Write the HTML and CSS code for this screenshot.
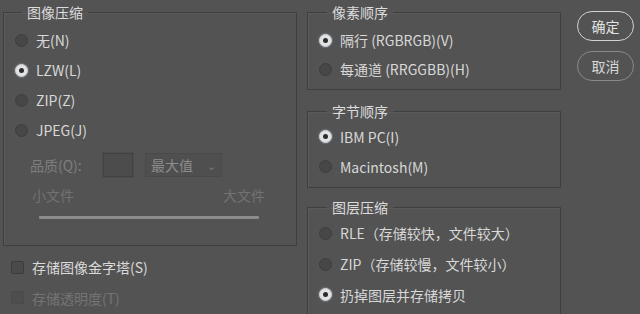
FILE: index.html
```html
<!DOCTYPE html>
<html lang="zh-CN">
<head>
<meta charset="utf-8">
<title>TIFF 选项</title>
<link rel="stylesheet" href="styles.css">
</head>
<body>
<div class="dialog">
  <div class="col-left">
    <fieldset class="group group-image">
      <legend>图像压缩</legend>
      <div class="inner inner-image">
        <div class="row"><span class="radio"></span><span class="label">无(N)</span></div>
        <div class="row"><span class="radio checked"></span><span class="label">LZW(L)</span></div>
        <div class="row"><span class="radio"></span><span class="label">ZIP(Z)</span></div>
        <div class="row"><span class="radio"></span><span class="label">JPEG(J)</span></div>
        <div class="quality">
          <span class="q-label">品质(Q):</span>
          <span class="q-input"></span>
          <span class="q-select">最大值<span class="chev">⌄</span></span>
        </div>
        <div class="size-labels"><span>小文件</span><span>大文件</span></div>
        <div class="slider"></div>
      </div>
    </fieldset>
    <div class="checks">
      <div class="check-row"><span class="checkbox"></span><span class="label">存储图像金字塔(S)</span></div>
      <div class="check-row disabled"><span class="checkbox"></span><span class="label">存储透明度(T)</span></div>
    </div>
  </div>
  <div class="col-right">
    <fieldset class="group group-pixel">
      <legend>像素顺序</legend>
      <div class="inner inner-pixel">
        <div class="row row29"><span class="radio checked"></span><span class="label">隔行 (RGBRGB)(V)</span></div>
        <div class="row row29"><span class="radio"></span><span class="label">每通道 (RRGGBB)(H)</span></div>
      </div>
    </fieldset>
    <fieldset class="group group-byte">
      <legend>字节顺序</legend>
      <div class="inner inner-byte">
        <div class="row"><span class="radio checked"></span><span class="label">IBM PC(I)</span></div>
        <div class="row"><span class="radio"></span><span class="label">Macintosh(M)</span></div>
      </div>
    </fieldset>
    <fieldset class="group group-layer">
      <legend>图层压缩</legend>
      <div class="inner inner-layer">
        <div class="row row31"><span class="radio"></span><span class="label">RLE（存储较快，文件较大）</span></div>
        <div class="row row31"><span class="radio"></span><span class="label">ZIP（存储较慢，文件较小）</span></div>
        <div class="row row31"><span class="radio checked"></span><span class="label">扔掉图层并存储拷贝</span></div>
      </div>
    </fieldset>
  </div>
  <div class="col-buttons">
    <button class="btn btn-primary">确定</button>
    <button class="btn">取消</button>
  </div>
</div>
</body>
</html>
```

FILE: styles.css
```css
* { box-sizing: border-box; }
html, body {
  margin: 0;
  padding: 0;
  background: #535353;
  width: 640px;
  height: 314px;
  overflow: hidden;
}
body {
  font-family: "Noto Sans CJK SC", "Noto Sans", sans-serif;
  font-size: 14px;
  color: #d8d8d8;
}
.dialog {
  display: flex;
  align-items: flex-start;
  padding: 3px 0 0 3px;
}
.col-left {
  width: 294px;
  display: flex;
  flex-direction: column;
}
.col-right {
  width: 254px;
  margin-left: 10px;
  display: flex;
  flex-direction: column;
}
.col-buttons {
  margin-left: 16px;
  width: 57px;
  display: flex;
  flex-direction: column;
  gap: 10px;
  padding-top: 8px;
}
.group {
  margin: 0;
  padding: 0;
  border: 1px solid #3f3f3f;
  box-shadow: inset 1px 1px 0 #5a5a5a;
  min-width: 0;
}
.group legend {
  margin-left: 19px;
  padding: 0 5px;
  line-height: 18px;
  height: 18px;
  font-size: 14px;
  color: #dcdcdc;
}
.group-image legend { margin-left: 18px; }
.inner {
  display: flex;
  flex-direction: column;
}
.inner-image { height: 224px; padding-top: 4px; }
.inner-pixel { height: 68px; padding-top: 4.5px; }
.group-byte { margin-top: 12px; }
.inner-byte { height: 67px; padding-top: 1.7px; }
.group-layer { margin-top: 10px; height: 140px; }
.inner-layer { padding-top: 2px; }

.row {
  display: flex;
  align-items: center;
  height: 30px;
  padding-left: 11px;
}
.row29 { height: 29px; }
.row31 { height: 30.8px; }
.radio {
  width: 13px;
  height: 13px;
  border-radius: 50%;
  background: #474747;
  border: 1px solid #3e3e3e;
  flex: none;
  position: relative;
}
.radio.checked {
  background: #e2e2e2;
  border-color: #cfcfcf;
  box-shadow: 0 0 1px 1px rgba(150, 170, 200, 0.35);
}
.radio.checked::after {
  content: "";
  position: absolute;
  left: 3px;
  top: 3px;
  width: 5px;
  height: 5px;
  border-radius: 50%;
  background: #2c2c2c;
}
.label {
  margin-left: 8px;
  white-space: nowrap;
  line-height: 18px;
}

.quality {
  display: flex;
  align-items: center;
  margin-top: 8px;
  height: 24px;
  padding-left: 26px;
  color: #7e7e7e;
}
.q-label { width: 73px; }
.q-input {
  width: 30px;
  height: 24px;
  border: 1px solid #414141;
  box-shadow: 0 0 0 1px #4d4d4d;
  background: #4c4c4c;
}
.q-select {
  margin-left: 12px;
  width: 77px;
  height: 24px;
  border: 1px solid #4a4a4a;
  background: #4f4f4f;
  display: flex;
  align-items: center;
  padding-left: 5px;
  color: #8c8c8c;
  font-size: 14px;
  position: relative;
}
.chev {
  margin-left: auto;
  margin-right: 5px;
  font-size: 11px;
  color: #7a7a7a;
  line-height: 10px;
}
.size-labels {
  display: flex;
  justify-content: space-between;
  margin-top: 9px;
  height: 18px;
  line-height: 18px;
  padding-left: 28px;
  padding-right: 31px;
  color: #727272;
}
.slider {
  margin-top: 12px;
  margin-left: 35px;
  width: 220px;
  height: 3px;
  background: #8c8c8c;
  border-radius: 1px;
}

.checks {
  margin-top: 6px;
  display: flex;
  flex-direction: column;
}
.check-row {
  display: flex;
  align-items: center;
  height: 30.5px;
  padding-left: 8px;
}
.checkbox {
  width: 13px;
  height: 13px;
  border: 1px solid #3c3c3c;
  background: #4a4a4a;
  border-radius: 2px;
  flex: none;
}
.check-row .label { margin-left: 8px; color: #dadada; }
.check-row.disabled .checkbox { background: #4e4e4e; border-color: #4a4a4a; }
.check-row.disabled .label { color: #747474; }

.btn {
  font-family: inherit;
  font-size: 14px;
  height: 30px;
  width: 57px;
  border-radius: 15px;
  background: transparent;
  border: 1.5px solid #8a8a8a;
  color: #d8d8d8;
  padding: 0;
  line-height: 26px;
}
.btn-primary {
  border-color: #d2d2d2;
  color: #e2e2e2;
}
```
